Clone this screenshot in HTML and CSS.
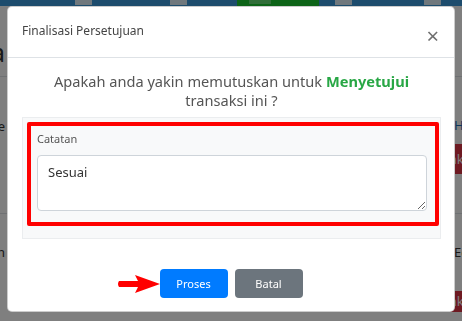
FILE: index.html
```html
<!DOCTYPE html>
<html lang="en">
<head>
    <meta charset="UTF-8">
    <meta name="viewport" content="width=device-width, initial-scale=1.0">
    <title>Finalisasi Persetujuan</title>
    <link rel="stylesheet" href="styles.css">
</head>
<body>
    <nav class="navbar">
        <span class="nav-icon" style="margin-left: 75px"></span>
        <span class="nav-icon" style="margin-left: 78px"></span>
        <span class="nav-item active"><span class="nav-icon"></span></span>
        <span class="nav-icon" style="margin-left: 16px"></span>
        <span class="nav-icon" style="margin-left: 72px"></span>
    </nav>

    <div class="page">
        <div class="page-row head">
            <span class="cell-left title">Data</span>
        </div>
        <div class="page-row first">
            <span class="cell-left">Tipe</span>
            <span class="cell-right">
                <span class="link">Harga</span>
                <span class="btn-danger">Tolak</span>
            </span>
        </div>
        <div class="page-row second">
            <span class="cell-left">Satuan</span>
            <span class="cell-right">
                <span>Edit</span>
                <span class="btn-danger lower">Tolak</span>
            </span>
        </div>
    </div>

    <div class="backdrop">
        <div class="modal">
            <div class="modal-header">
                <h5 class="modal-title">Finalisasi Persetujuan</h5>
                <span class="close">&times;</span>
            </div>
            <div class="modal-body">
                <p class="question">Apakah anda yakin memutuskan untuk <b class="approve">Menyetujui</b><br>transaksi ini ?</p>
                <div class="panel">
                    <div class="highlight">
                        <label for="catatan">Catatan</label>
                        <textarea id="catatan">Sesuai</textarea>
                    </div>
                </div>
            </div>
            <div class="modal-footer">
                <svg class="arrow" width="44" height="20" viewBox="0 0 44 20">
                    <path d="M2 7 L21 7 L18 1 L43 10 L18 19 L21 13 L2 13 Q0 10 2 7 Z" fill="#f00"/>
                </svg>
                <button class="btn btn-primary">Proses</button>
                <button class="btn btn-secondary">Batal</button>
            </div>
        </div>
    </div>
</body>
</html>
```

FILE: styles.css
```css
* {
    box-sizing: border-box;
}
body {
    margin: 0;
    overflow: hidden;
    font-family: 'Noto Sans', 'Open Sans', sans-serif;
    color: #212529;
    background: #fff;
}
.navbar {
    height: 6px;
    display: flex;
    align-items: flex-start;
    background: #3a98da;
}
.nav-icon {
    display: inline-block;
    width: 17px;
    height: 5px;
    background: #fff;
    opacity: 0.85;
}
.nav-item.active {
    display: flex;
    justify-content: flex-start;
    margin-left: 50px;
    width: 82px;
    height: 6px;
    padding-left: 12px;
    background: #1bc931;
}
.nav-item.active .nav-icon {
    background: #6fe07e;
    width: 22px;
    height: 4px;
}
.page {
    overflow: hidden;
}
.page-row {
    display: flex;
    justify-content: space-between;
    border-bottom: 1px solid #dee2e6;
    font-size: 13px;
}
.page-row.head {
    height: 71px;
    align-items: flex-start;
}
.page-row.first {
    height: 137px;
}
.page-row.second {
    height: 120px;
    border-bottom: none;
}
.cell-left {
    width: 5px;
    display: flex;
    justify-content: flex-end;
    white-space: nowrap;
    color: #333;
}
.page-row.first .cell-left {
    padding-top: 40px;
}
.page-row.second .cell-left {
    padding-top: 29px;
}
.cell-left.title {
    font-size: 26px;
    margin-top: 28px;
}
.cell-right {
    width: 8px;
    display: flex;
    flex-direction: column;
    align-items: flex-start;
    white-space: nowrap;
    color: #333;
}
.page-row.first .cell-right {
    padding-top: 39px;
}
.page-row.second .cell-right {
    padding-top: 29px;
}
.link {
    color: #1f6fb8;
}
.btn-danger {
    background: #dc3545;
    color: #fff;
    padding: 6px 10px 6px 0;
    margin-top: 10px;
    margin-left: -22px;
}
.btn-danger.lower {
    margin-top: 30px;
    padding: 1px 10px 2px 0;
}
.backdrop {
    position: fixed;
    inset: 0;
    background: rgba(0, 0, 0, 0.5);
}
.modal {
    width: 448px;
    margin: 6px auto 0;
    background: #fff;
    border: 1px solid rgba(0, 0, 0, 0.2);
    border-radius: 5px;
    display: flex;
    flex-direction: column;
}
.modal-header {
    height: 51px;
    display: flex;
    align-items: center;
    justify-content: space-between;
    padding: 0 15px 0 14px;
    border-bottom: 1px solid #dee2e6;
}
.modal-title {
    margin: 0 0 3px;
    font-size: 12px;
    font-weight: 400;
    color: #444;
}
.close {
    font-size: 22px;
    color: #707070;
    line-height: 1;
    margin-top: 5px;
}
.modal-body {
    padding: 14px 13px 14px 14px;
}
.question {
    margin: 0 0 7px;
    text-align: center;
    font-size: 14.6px;
    line-height: 19px;
    color: #555;
}
.approve {
    color: #28a745;
}
.panel {
    background: #f8f9fa;
    border: 1px solid #ebedef;
    padding: 4px 1px 12px 4px;
}
.highlight {
    border: 4px solid #f00;
    border-radius: 2px;
    padding: 5px 8px 11px 6px;
}
label {
    display: block;
    font-size: 11px;
    color: #555;
    margin-bottom: 9px;
}
textarea {
    display: block;
    width: 100%;
    height: 56px;
    border: 1px solid #ced4da;
    border-radius: 4px;
    padding: 7px 10px;
    font-family: 'Noto Sans', 'Open Sans', sans-serif;
    font-size: 13px;
    color: #333;
    resize: vertical;
}
.modal-footer {
    position: relative;
    height: 58px;
    display: flex;
    justify-content: center;
    align-items: center;
    gap: 7px;
    padding-top: 2px;
}
.btn {
    width: 68px;
    height: 29px;
    border: none;
    border-radius: 4px;
    color: #fff;
    font-family: 'Noto Sans', 'Open Sans', sans-serif;
    font-size: 11px;
    cursor: pointer;
}
.btn-primary {
    background: #007bff;
}
.btn-secondary {
    background: #6c757d;
}
.arrow {
    position: absolute;
    left: 109px;
    top: 21px;
}
```
